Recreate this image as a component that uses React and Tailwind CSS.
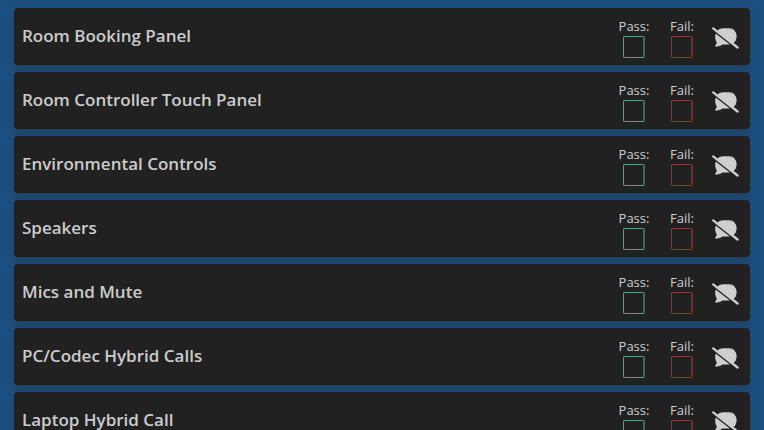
const tests = [
  "Room Booking Panel",
  "Room Controller Touch Panel",
  "Environmental Controls",
  "Speakers",
  "Mics and Mute",
  "PC/Codec Hybrid Calls",
  "Laptop Hybrid Call",
];

function CommentOffIcon() {
  return (
    <svg viewBox="0 0 27 22" className="h-[22px] w-[27px]" aria-hidden="true">
      <path
        d="M11.5 1.2H17C21.5 1.2 24.6 4.6 24.6 9.2C24.6 14 21.5 17.4 17 17.4H10.4C8.6 18.8 6.3 19.6 3.5 19.6C3 19.6 2.8 19.1 3.1 18.7C4.2 17.5 4.7 16.4 4.7 15C3.6 13.5 3.2 11.6 3.2 9.4C3.2 4.6 6.9 1.2 11.5 1.2Z"
        fill="currentColor"
      />
      <path d="M1 3.2L25 21.9" stroke="#212121" strokeWidth="1.8" />
      <path d="M1.2 1.4L25.6 20.5" stroke="currentColor" strokeWidth="2.3" strokeLinecap="round" />
    </svg>
  );
}

function Mark({ label, tone }) {
  return (
    <label className="flex w-12 flex-col items-center text-[13px] leading-5 text-[#d0d0d0]">
      {label}
      <input
        type="checkbox"
        className={`size-[22px] appearance-none rounded-xs border border-r-2 ${tone}`}
      />
    </label>
  );
}

function TestCard({ name }) {
  return (
    <li className="flex h-[57px] items-center rounded-sm bg-[#212121] pr-[11px] pl-2 shadow-[0_4px_10px_rgba(33,33,33,0.3)]">
      <h2 className="flex-1 pb-0.5 text-[17px] leading-6 font-semibold text-[#cccccc]">{name}</h2>
      <Mark label="Pass:" tone="border-[#629c80] border-r-[#42685a] checked:bg-[#629c80]" />
      <Mark label="Fail:" tone="border-[#8f3a35] border-r-[#65302d] checked:bg-[#8f3a35]" />
      <button type="button" aria-label={`No comment on ${name}`} className="ml-1.5 pt-0.5 text-[#cfcfcf]">
        <CommentOffIcon />
      </button>
    </li>
  );
}

export default function App() {
  return (
    <main className="h-screen overflow-hidden bg-[#1d5081] px-3.5 pt-2 font-['Open_Sans','Noto_Sans',sans-serif]">
      <ul className="flex flex-col gap-[7px]">
        {tests.map((name) => (
          <TestCard key={name} name={name} />
        ))}
      </ul>
    </main>
  );
}
